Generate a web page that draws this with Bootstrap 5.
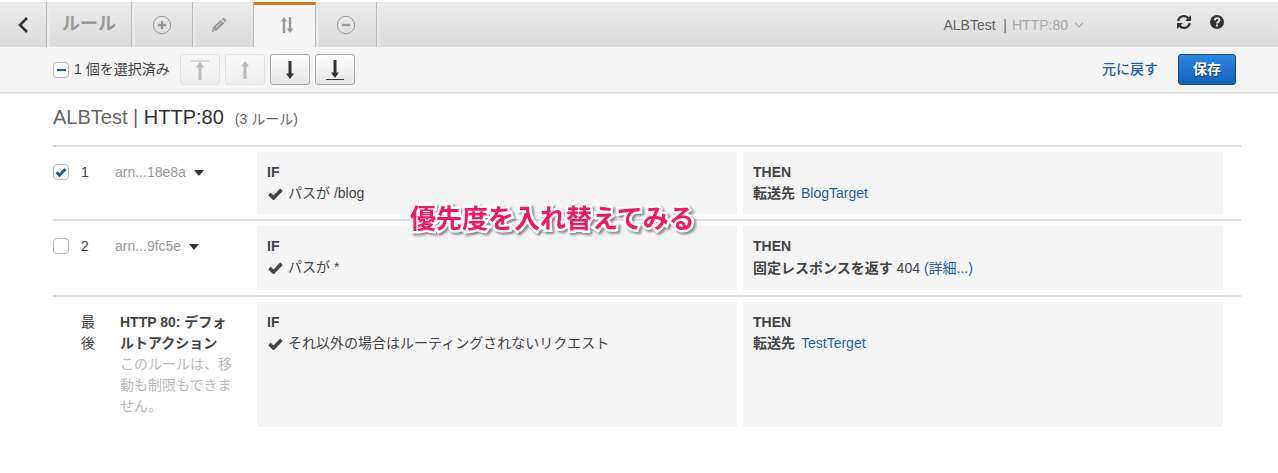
<!DOCTYPE html>
<html lang="ja">
<head>
<meta charset="utf-8">
<meta name="viewport" content="width=device-width, initial-scale=1">
<title>ALBTest | HTTP:80</title>
<link href="https://cdn.jsdelivr.net/npm/bootstrap@5.3.0/dist/css/bootstrap.min.css" rel="stylesheet">
<style>
  body { font: 14px/21px "Liberation Sans", "Noto Sans CJK JP", sans-serif; color: #444; background: #fff; }
  a { color: #1f5fae; text-decoration: none; }
  svg { display: block; }
  .topbar { margin-top: 2px; height: 45px; background: linear-gradient(#ebebeb, #dcdcdc); }
  .tab-item { height: 45px; border: 0; border-right: 1px solid #bbb; padding: 0; background: none; color: #999;
    width: 61px; display: flex; align-items: center; justify-content: center; box-shadow: inset 3px 0 #eaeaea; }
  .tab-back { width: 47px; color: #333; box-shadow: none; }
  .tab-title { width: 85px; font-size: 18px; font-weight: 700; }
  .tab-item.active { width: 62px; background: #f5f5f5; border-top: 3px solid #d17a12; box-shadow: none; padding-left: 4px; padding-bottom: 3px; }
  .tab-edge { width: 3px; background: #eaeaea; }
  .picker { font-size: 14px; color: #666; margin-right: 91px; gap: 5px; }
  .picker span { color: #aaa; }
  .head-icon { color: #333; margin-bottom: 6px; }
  .head-icons { gap: 17px; }
  .head-end { padding-right: 53px; }
  .toolbar { height: 46px; background: #f5f5f5; border-bottom: 1px solid #ddd; box-shadow: 0 1px 1px #eee; padding: 0 42px 0 53px; }
  .toolbar label { margin: 0 10px 0 5px; }
  .move-group { gap: 5px; }
  .tick { appearance: none; width: 16px; height: 16px; margin: 0; border: 1px solid #bbb; border-radius: 4px; background: #fff no-repeat center; flex: none; }
  .tick:indeterminate { background-image: linear-gradient(#1a5fb4, #1a5fb4); background-size: 9px 2px; }
  .tick:checked { background-image: url("data:image/svg+xml,%3Csvg xmlns='http://www.w3.org/2000/svg' viewBox='0 0 14 14'%3E%3Cpath d='M2.5 7.2l3 3L11.5 4' fill='none' stroke='%231a5fb4' stroke-width='3'/%3E%3C/svg%3E"); }
  .move-btn { width: 40px; height: 31px; padding: 0; border: 1px solid #aaa; border-radius: 3px; color: #333; background: linear-gradient(#fff, #e4e4e4); display: flex; align-items: center; justify-content: center; }
  .move-btn:disabled { color: #bbb; border-color: #e2e2e2; background: linear-gradient(#f8f8f8, #eee); }
  .undo-link { font-weight: 500; margin-right: 20px; }
  .save-btn { width: 58px; height: 31px; padding: 0; border: 1px solid #124a8c; border-radius: 3px; color: #fff; font-size: 14px; font-weight: 700;
    background: linear-gradient(#2a86e2, #1462ba); text-shadow: 0 1px 1px #0008; }
  .rules { padding: 12px 37px 0 53px; }
  .rules-title { font-size: 20px; line-height: 24px; margin: 0 0 14px; font-weight: 400; color: #666; display: flex; align-items: baseline; }
  .rules-title b { font-weight: 400; color: #333; }
  .rules-title small { font-size: 14px; margin-left: 11px; }
  .rule-row { border-top: 2px solid #ddd; padding: 5px 18px 5px 0; gap: 6px; }
  .rule-id { width: 198px; padding: 10px 0; flex: none; }
  .rule-id .tick { margin-top: 2px; }
  .rule-no { width: 14px; margin-left: 12px; }
  .rule-no-last { width: 14px; margin-left: 28px; }
  .rule-arn { margin-left: 20px; border: 0; background: none; padding: 0; color: #999; display: flex; align-items: center; gap: 8px; height: 21px; }
  .rule-default { width: 114px; margin-left: 25px; }
  .rule-default p { margin: 0; color: #bbb; }
  .rule-cell { flex: 1 1 0; background: #f5f5f5; padding: 10px; }
  .rule-target { display: flex; gap: 6px; }
  .rule-tall { line-height: 23px; }
  .caption-note { position: absolute; left: 50%; top: 200px; margin-left: -229px; font-size: 26px; line-height: 38px; font-weight: 700; color: #fa145f; white-space: nowrap; paint-order: stroke fill; -webkit-text-stroke: 5px #fff; filter: drop-shadow(2px 2px 1px #888); }
</style>
</head>
<body>
<svg width="0" height="0" class="position-absolute" aria-hidden="true">
  <symbol id="check" viewBox="0 0 15 12"><path d="M1.5 6l4 4L13.5 1.8" fill="none" stroke="currentColor" stroke-width="3.6"/></symbol>
  <symbol id="caret" viewBox="0 0 10 6"><path d="M0 0h10L5 6z" fill="currentColor"/></symbol>
</svg>
<header class="topbar d-flex">
  <button class="tab-item tab-back" aria-label="戻る"><svg width="12" height="18" viewBox="0 0 12 18"><path d="M10 2L3 9l7 7" fill="none" stroke="currentColor" stroke-width="2.6"/></svg></button>
  <button class="tab-item tab-title">ルール</button>
  <button class="tab-item" aria-label="追加"><svg width="20" height="20" viewBox="0 0 20 20" fill="none" stroke="currentColor"><circle cx="10" cy="10" r="8.7"/><path d="M10 6v8M6 10h8" stroke-width="2.4"/></svg></button>
  <button class="tab-item pe-2" aria-label="編集"><svg width="16" height="16" viewBox="0 0 16 16" fill="currentColor"><path d="M9.8 2.8l3.6 3.6-8 7.4-4.4 1 .9-4.6zM10.8 1.9l1.2-1q.6-.5 1.2 0l2 2.1q.5.6 0 1.2l-1 1z"/><path d="M5 10.3l5.5-5.1M2.2 12l1.9 1.9" stroke="#e4e4e4" stroke-width=".9"/></svg></button>
  <button class="tab-item active" aria-label="並べ替え"><svg width="14" height="18" viewBox="0 0 14 18" fill="none" stroke="currentColor"><path d="M4 17V3M10 1v14" stroke-width="2.4"/><path d="M.8 5.5L4 1l3.2 4.5zM6.8 12.5L10 17l3.2-4.5z" fill="currentColor" stroke="none"/></svg></button>
  <button class="tab-item" aria-label="削除"><svg width="20" height="20" viewBox="0 0 20 20" fill="none" stroke="currentColor"><circle cx="10" cy="10" r="8.7"/><path d="M6 10h8" stroke-width="2.4"/></svg></button>
  <div class="tab-edge"></div>
  <div class="head-end ms-auto d-flex align-items-center">
    <button class="picker btn p-0 border-0 lh-1 d-flex align-items-center">ALBTest&nbsp;&nbsp;| <span>HTTP:80</span><svg width="12" height="8" viewBox="0 0 12 8"><path d="M2 2l4 4 4-4" fill="none" stroke="#aaa" stroke-width="1.2"/></svg></button>
    <div class="head-icons d-flex">
      <button class="head-icon btn p-0 border-0" aria-label="更新"><svg width="16" height="16" viewBox="0 0 16 16" fill="none" stroke="currentColor" stroke-width="2.2"><path d="M2.2 7A5.8 5.8 0 0 1 12.4 4.2M13.8 9A5.8 5.8 0 0 1 3.6 11.8"/><path d="M15 1v6H9zM1 15V9h6z" fill="currentColor" stroke="none"/></svg></button>
      <button class="head-icon btn p-0 border-0" aria-label="ヘルプ"><svg width="16" height="16" viewBox="0 0 16 16"><circle cx="8" cy="8" r="7" fill="currentColor"/><path d="M5.7 6.3q.2-2.2 2.4-2.2 2.3 0 2.3 2 0 1-1.2 1.8Q8 8.6 8 9.5" fill="none" stroke="#e6e6e6" stroke-width="1.9"/><path d="M7 10.5h2v2H7z" fill="#e6e6e6"/></svg></button>
    </div>
  </div>
</header>

<div class="toolbar d-flex align-items-center">
  <input class="tick" type="checkbox" id="pick-all"><label for="pick-all">1 個を選択済み</label>
  <div class="move-group d-flex">
    <button class="move-btn" disabled aria-label="先頭へ"><svg width="20" height="22" viewBox="0 0 20 22"><path d="M1 2h18" stroke="currentColor"/><path d="M10 21V6" stroke="currentColor" stroke-width="3"/><path d="M6 8.5L10 3l4 5.5z" fill="currentColor"/></svg></button>
    <button class="move-btn" disabled aria-label="上へ"><svg width="20" height="22" viewBox="0 0 20 22"><path d="M10 20V5" stroke="currentColor" stroke-width="3"/><path d="M6 7.5L10 2l4 5.5z" fill="currentColor"/></svg></button>
    <button class="move-btn" aria-label="下へ"><svg width="20" height="22" viewBox="0 0 20 22"><path d="M10 2v14" stroke="currentColor" stroke-width="3"/><path d="M6 14.5L10 20l4-5.5z" fill="currentColor"/></svg></button>
    <button class="move-btn" aria-label="末尾へ"><svg width="20" height="22" viewBox="0 0 20 22"><path d="M10 1v14" stroke="currentColor" stroke-width="3"/><path d="M6 13.5L10 19l4-5.5z" fill="currentColor"/><path d="M1 20.5h18" stroke="currentColor"/></svg></button>
  </div>
  <a href="#" class="undo-link ms-auto">元に戻す</a>
  <button class="save-btn">保存</button>
</div>

<main class="rules">
  <h1 class="rules-title">ALBTest |&nbsp;<b>HTTP:80</b><small>(3 ルール)</small></h1>

  <section class="rule-row d-flex">
    <div class="rule-id d-flex align-items-start">
      <input class="tick" type="checkbox" id="r1" checked><label class="rule-no" for="r1">1</label>
      <button class="rule-arn">arn...18e8a <svg width="10" height="6" color="#333"><use href="#caret"/></svg></button>
    </div>
    <div class="rule-cell"><b>IF</b><div class="d-flex align-items-center gap-1"><svg width="17" height="12"><use href="#check"/></svg>パスが /blog</div></div>
    <div class="rule-cell"><b>THEN</b><div class="rule-target"><b>転送先</b><a href="#">BlogTarget</a></div></div>
  </section>

  <section class="rule-row d-flex">
    <div class="rule-id d-flex align-items-start">
      <input class="tick" type="checkbox" id="r2"><label class="rule-no" for="r2">2</label>
      <button class="rule-arn">arn...9fc5e <svg width="10" height="6" color="#333"><use href="#caret"/></svg></button>
    </div>
    <div class="rule-cell"><b>IF</b><div class="d-flex align-items-center gap-1"><svg width="17" height="12"><use href="#check"/></svg>パスが *</div></div>
    <div class="rule-cell"><b>THEN</b><div class="rule-tall"><b>固定レスポンスを返す</b> 404 <a href="#">(詳細...)</a></div></div>
  </section>

  <section class="rule-row d-flex">
    <div class="rule-id d-flex align-items-start">
      <div class="rule-no-last">最後</div>
      <div class="rule-default"><b>HTTP 80: デフォルトアクション</b><p>このルールは、移動も制限もできません。</p></div>
    </div>
    <div class="rule-cell"><b>IF</b><div class="d-flex align-items-center gap-1"><svg width="17" height="12"><use href="#check"/></svg>それ以外の場合はルーティングされないリクエスト</div></div>
    <div class="rule-cell"><b>THEN</b><div class="rule-target"><b>転送先</b><a href="#">TestTerget</a></div></div>
  </section>
</main>
<div class="caption-note">優先度を入れ替えてみる</div>
<script src="https://cdn.jsdelivr.net/npm/bootstrap@5.3.0/dist/js/bootstrap.bundle.min.js"></script>
<script>document.getElementById('pick-all').indeterminate = true;</script>
</body>
</html>
